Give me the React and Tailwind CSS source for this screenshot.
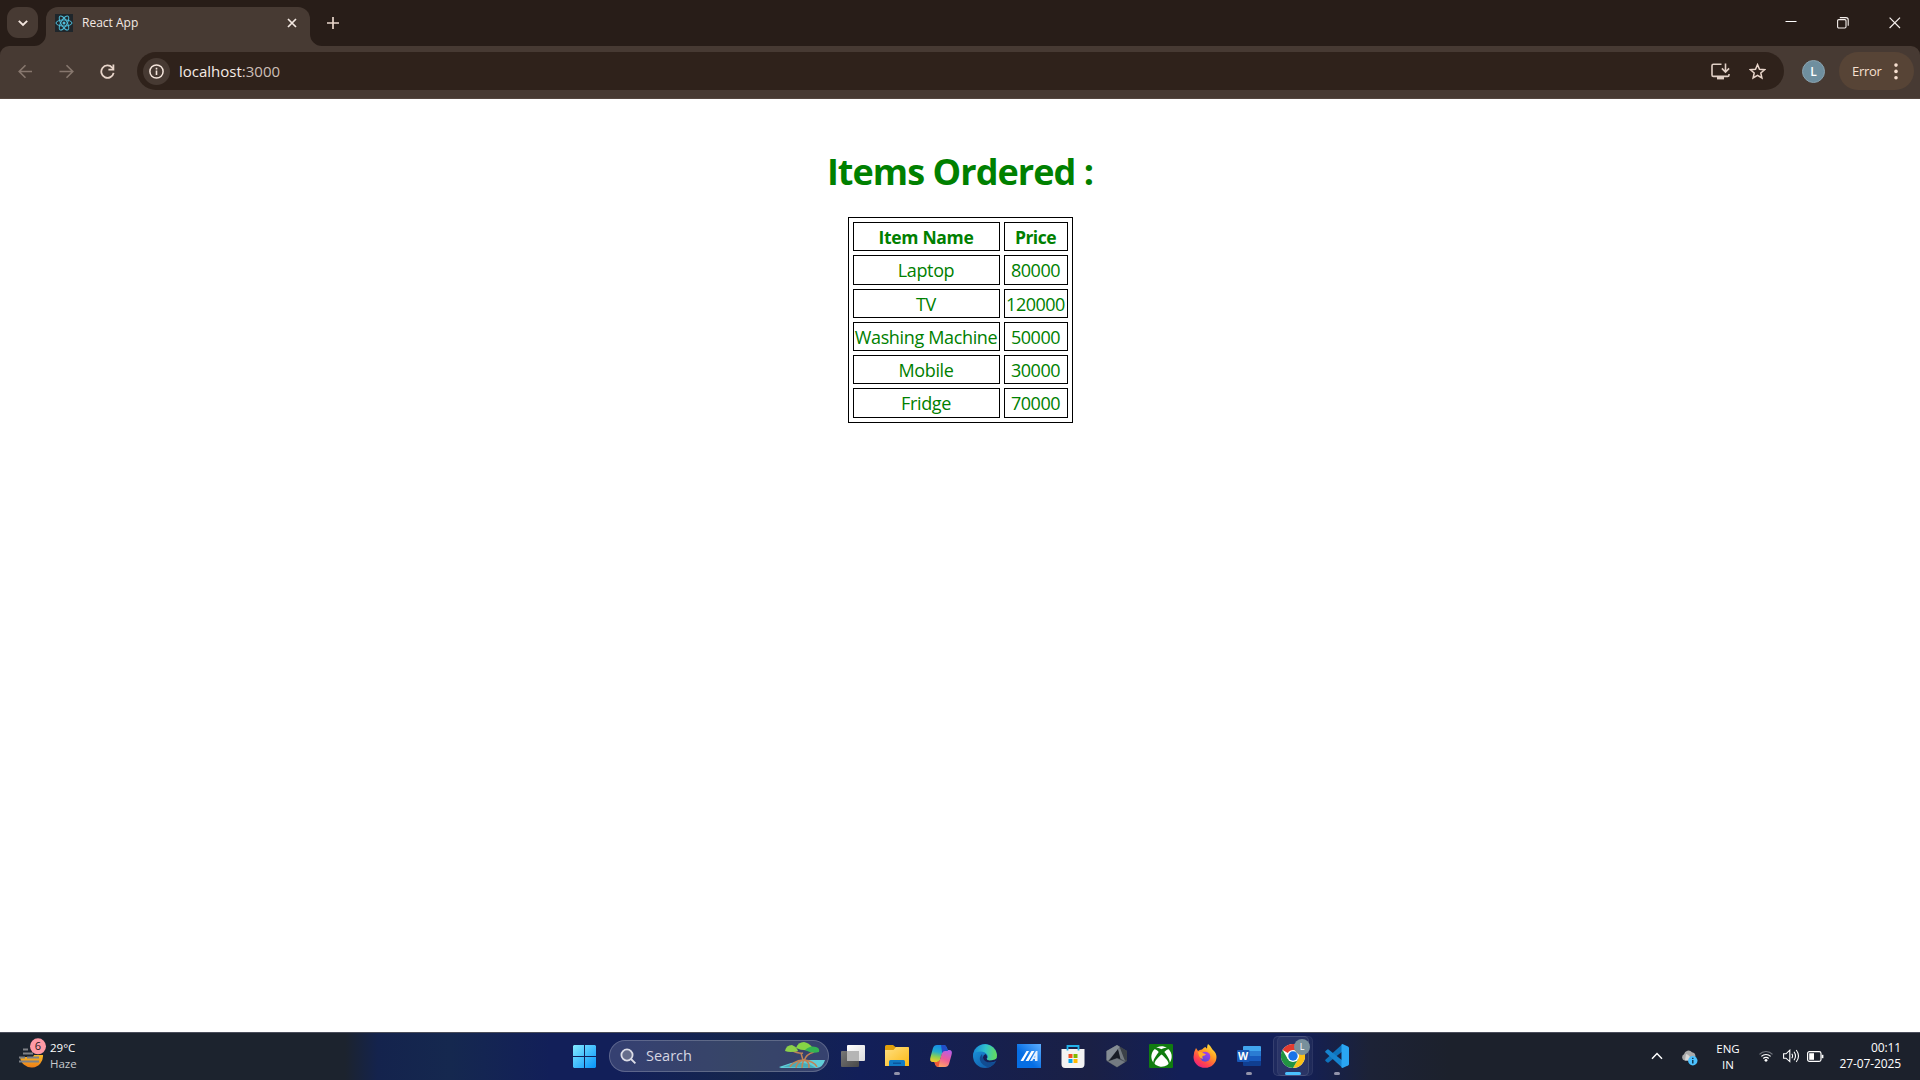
import React from "react";
import { FaXbox } from "react-icons/fa";

const chromeText = "font-['Open_Sans','Noto_Sans',sans-serif]";

function ReactLogo() {
  return (
    <svg width="18" height="18" viewBox="0 0 18 18" fill="none" stroke="#4fbdd9" strokeWidth="1">
      <rect width="18" height="18" fill="#1f262b" stroke="none" />
      <ellipse cx="9" cy="9" rx="8" ry="3.1" />
      <ellipse cx="9" cy="9" rx="8" ry="3.1" transform="rotate(60 9 9)" />
      <ellipse cx="9" cy="9" rx="8" ry="3.1" transform="rotate(120 9 9)" />
      <circle cx="9" cy="9" r="1.5" fill="#4fbdd9" stroke="none" />
    </svg>
  );
}

function TabStrip() {
  return (
    <div className="flex h-[46px] bg-[#281d18]">
      <div className="ml-[7px] mt-[7px] flex h-[31px] w-[31px] items-center justify-center rounded-[11px] bg-[#473a33]">
        <svg width="31" height="31" viewBox="0 0 31 31" fill="none" stroke="#f3e6df" strokeWidth="1.9">
          <path d="M11.8 13.8 L16 18 L20.2 13.8" />
        </svg>
      </div>
      <svg className="mt-[34px] shrink-0 -ml-[4px]" width="12" height="12" viewBox="0 0 12 12">
        <path d="M12 0 A12 12 0 0 1 0 12 H12 Z" fill="#473a33" />
      </svg>
      <div className="mt-[7px] flex h-[39px] w-[264px] items-start rounded-t-[12px] bg-[#473a33]">
        <div className="ml-[9px] mt-[7px]">
          <ReactLogo />
        </div>
        <span className={`ml-[9px] mt-[7px] whitespace-nowrap text-[12px] leading-[17px] text-[#f4e9e3] ${chromeText}`}>React App</span>
        <svg className="ml-auto mr-[13px] mt-[11px]" width="10" height="10" viewBox="0 0 10 10" stroke="#f4e9e3" strokeWidth="1.7">
          <path d="M1 1 L9 9 M9 1 L1 9" />
        </svg>
      </div>
      <svg className="mt-[34px] shrink-0" width="12" height="12" viewBox="0 0 12 12">
        <path d="M0 0 A12 12 0 0 0 12 12 H0 Z" fill="#473a33" />
      </svg>
      <svg className="ml-[5px] mt-[17px]" width="12" height="12" viewBox="0 0 12 12" stroke="#e8d5ca" strokeWidth="1.7">
        <path d="M6 0 V12 M0 6 H12" />
      </svg>
      <div className="ml-auto mr-[19px] flex">
        <svg className="mt-[21px]" width="12" height="2" viewBox="0 0 12 2">
          <path d="M0.5 0.5 H11.5" stroke="#fff" />
        </svg>
        <svg className="ml-[40px] mt-[17px]" width="12" height="12" viewBox="0 0 12 12" fill="none" stroke="#f5efec" strokeWidth="1.1">
          <rect x="0.6" y="2.6" width="8.4" height="8.4" rx="1.2" />
          <path d="M2.8 0.6 H9 Q11.2 0.6 11.2 2.8 V8.8" />
        </svg>
        <svg className="ml-[40px] mt-[17px]" width="12" height="12" viewBox="0 0 12 12" stroke="#f5efec" strokeWidth="1.2">
          <path d="M0.6 0.6 L11 11 M11 0.6 L0.6 11" />
        </svg>
      </div>
    </div>
  );
}

function Toolbar() {
  return (
    <div className="bg-[#281d18]">
      <div className="flex h-[53px] rounded-t-[9px] border-b border-[#54463f] bg-[#473a33]">
        <svg className="ml-[18px] mt-[18px]" width="15" height="15" viewBox="0 0 15 15" fill="none" stroke="#87776e" strokeWidth="1.6">
          <path d="M14 7.5 H1.6 M7.5 1.2 L1.2 7.5 L7.5 13.8" />
        </svg>
        <svg className="ml-[26px] mt-[18px]" width="15" height="15" viewBox="0 0 15 15" fill="none" stroke="#87776e" strokeWidth="1.6">
          <path d="M0.5 7.5 H13.4 M7.5 1.2 L13.8 7.5 L7.5 13.8" />
        </svg>
        <svg className="ml-[26px] mt-[18px]" width="15" height="15" viewBox="0 0 15 15" fill="none" stroke="#e8d5ca" strokeWidth="1.8">
          <path d="M13.6 8.8 A6.2 6.2 0 1 1 12.2 3.6 L13.2 4.8" />
          <path d="M13.4 0.6 V5.6 H8.4" />
        </svg>
        <div className="ml-[22px] mt-[6px] flex h-[38px] w-[1647px] items-center rounded-full bg-[#2f221b]">
          <div className="ml-[6px] flex h-[27px] w-[27px] items-center justify-center rounded-full bg-[#473a33]">
            <svg width="15" height="15" viewBox="0 0 15 15" fill="none" stroke="#f4e5dc" strokeWidth="1.5">
              <circle cx="7.5" cy="7.5" r="6.6" />
              <path d="M7.5 6.6 V11 M7.5 3.8 V5.4" strokeWidth="1.6" />
            </svg>
          </div>
          <span className={`ml-[9px] text-[15px] leading-[20px] text-[#f6ebe5] ${chromeText}`}>
            localhost<span className="text-[#cdbfb7]">:3000</span>
          </span>
          <svg className="ml-auto" width="20" height="17" viewBox="0 0 20 17" fill="none" stroke="#e0cfc5" strokeWidth="1.6">
            <path d="M10.5 1.3 H2.4 Q1 1.3 1 2.7 V12 Q1 13.4 2.4 13.4 H16.6 Q18 13.4 18 12 V11" />
            <path d="M14.5 0.4 V8.6 M10.9 5.4 L14.5 9 L18.1 5.4" />
            <path d="M6 15.2 H13" strokeWidth="2.4" />
          </svg>
          <svg className="ml-[18px] mr-[18px]" width="17" height="17" viewBox="0 0 17 17" fill="none" stroke="#e8d5ca" strokeWidth="1.5">
            <path d="M8.5 1.6 L10.5 6.2 L15.6 6.7 L11.8 10 L12.9 15 L8.5 12.4 L4.1 15 L5.2 10 L1.4 6.7 L6.5 6.2 Z" />
          </svg>
        </div>
        <div className={`ml-[18px] mt-[14px] flex h-[23px] w-[23px] items-center justify-center rounded-full border border-[#8aa3af] bg-[#6f8f9f] text-[12px] font-semibold text-white ${chromeText}`}>L</div>
        <div className="ml-[14px] mt-[6px] flex h-[38px] w-[75px] items-center rounded-full bg-[#574436]">
          <span className={`ml-[13px] pt-[1px] text-[13px] tracking-[-0.3px] text-[#f7e0d0] ${chromeText}`}>Error</span>
          <svg className="ml-auto mr-[16px]" width="4" height="17" viewBox="0 0 4 17" fill="#f7e0d0">
            <circle cx="2" cy="2.1" r="1.8" />
            <circle cx="2" cy="8.4" r="1.8" />
            <circle cx="2" cy="14.7" r="1.8" />
          </svg>
        </div>
      </div>
    </div>
  );
}

const items = [
  ["Laptop", "80000", "h-[30px]"],
  ["TV", "120000", "h-[29px]"],
  ["Washing Machine", "50000", "h-[29px]"],
  ["Mobile", "30000", "h-[29px]"],
  ["Fridge", "70000", "h-[30px]"],
];

function Row({ name, price, size, header }) {
  const weight = header ? "font-bold text-[17.5px]" : "text-[18px]";
  const nameTrack = header ? "tracking-[-0.3px]" : "tracking-[-0.35px]";
  return (
    <div className={`flex gap-[4px] ${size} ${weight} leading-[29px]`}>
      <div className={`w-[147px] whitespace-nowrap border border-black text-center ${nameTrack}`}>{name}</div>
      <div className="flex w-[64px] justify-center whitespace-nowrap border border-black tracking-[-0.5px]">{price}</div>
    </div>
  );
}

function Page() {
  return (
    <main className={`flex flex-1 flex-col items-center bg-white text-[#008000] ${chromeText}`}>
      <h1 className="mt-[48px] whitespace-nowrap text-[36px] font-bold leading-[50px] tracking-[-0.95px]">Items Ordered :</h1>
      <div className="mt-[20px] flex h-[206px] w-[225px] flex-col gap-[4px] border border-black p-[4px]">
        <Row name="Item Name" price="Price" size="h-[29px]" header />
        {items.map(([name, price, size]) => (
          <Row key={name} name={name} price={price} size={size} />
        ))}
      </div>
    </main>
  );
}

function WeatherIcon() {
  return (
    <svg width="29" height="30" viewBox="0 0 29 30">
      <defs>
        <linearGradient id="sun" x1="0" y1="0" x2="0" y2="1">
          <stop offset="0" stopColor="#f7b927" />
          <stop offset="1" stopColor="#ee7d16" />
        </linearGradient>
      </defs>
      <path d="M1 19 H14 L15 17 H24 A11.5 11.5 0 0 1 1 19 Z" fill="url(#sun)" />
      <path d="M4 11.5 H9 M4 15.5 H14 M0 19.5 H6 M8 19.5 H20 M0 23.5 H20" stroke="#7f8186" strokeWidth="2" />
      <circle cx="19" cy="8.3" r="8" fill="#ff9aa5" />
      <text x="19" y="12.2" textAnchor="middle" fontSize="11" fontFamily="Open Sans" fill="#1b1b20">6</text>
    </svg>
  );
}

function TreeIcon() {
  return (
    <svg width="46" height="28" viewBox="0 0 46 28">
      <path d="M0 25 L12 21 L27 18 L46 18 Q44 25 38 26 H2 Z" fill="#62cdd8" />
      <path d="M4 25 L18 20 L30 22 L37 26 Z" fill="#3795a5" opacity="0.6" />
      <path d="M12 8 Q20 12 24 11 M35 10 Q27 12 25 19 M22 11 Q23 15 24 18 M24 18 Q14 19 11 25 M24 18 Q18 20 17 26 M25 17 Q23 22 23 26 M25 18 Q31 20 30 26 M25 18 Q35 19 38 25" fill="none" stroke="#c08357" strokeWidth="1.5" />
      <path d="M6 9 Q7 3 13 3 Q18 5 19 9 Q11 11 6 9 Z" fill="#8bd04a" />
      <path d="M17 6 Q19 0 25 0 Q30 1 33 5 L31 8 Q23 9 17 6 Z" fill="#86d545" />
      <path d="M26 8 Q31 3 37 5 Q41 6 40 10 Q33 12 26 8 Z" fill="#35b353" />
    </svg>
  );
}

function StartIcon() {
  return (
    <svg width="23" height="23" viewBox="0 0 23 23">
      <defs>
        <linearGradient id="start" gradientUnits="userSpaceOnUse" x1="0" y1="0" x2="23" y2="23">
          <stop offset="0" stopColor="#83eaff" />
          <stop offset="1" stopColor="#0693fa" />
        </linearGradient>
      </defs>
      <path d="M1 0 H11 V11 H0 V1 Z M12 0 H22 L23 1 V11 H12 Z M0 12 H11 V23 H1 L0 22 Z M12 12 H23 V22 L22 23 H12 Z" fill="url(#start)" />
    </svg>
  );
}

const icons = {
  desktop: (
    <svg width="24" height="24" viewBox="0 0 24 24">
      <defs>
        <linearGradient id="tvw" x1="0" y1="0" x2="1" y2="1"><stop offset="0" stopColor="#fff" /><stop offset="1" stopColor="#dcdcdc" /></linearGradient>
        <linearGradient id="tvd" x1="0" y1="0" x2="1" y2="1"><stop offset="0" stopColor="#777" /><stop offset="1" stopColor="#484848" /></linearGradient>
      </defs>
      <rect x="6" y="1" width="18" height="16" rx="1" fill="url(#tvw)" />
      <rect x="0" y="7" width="18" height="16" rx="1" fill="url(#tvd)" />
      <path d="M6 7 H18 V17 H6 Z" fill="#b5b5b5" />
    </svg>
  ),
  folder: (
    <svg width="24" height="24" viewBox="0 0 24 24">
      <defs><linearGradient id="fold" x1="0" y1="0" x2="1" y2="1"><stop offset="0" stopColor="#ffe083" /><stop offset="1" stopColor="#fcb813" /></linearGradient></defs>
      <path d="M0 2.5 Q0 1 1.5 1 H8 L10.5 3 H22.5 Q24 3 24 4.5 V10 H0 Z" fill="#e09f0b" />
      <path d="M0 6 H8.5 L11 3 H23 Q24 3 24 4 V22 H0 Z" fill="url(#fold)" />
      <path d="M4 22 V17.5 Q4 16 5.5 16 H18.5 Q20 16 20 17.5 V22 Z" fill="#117ac6" />
      <path d="M8 18.5 H16 V20 H8 Z" fill="#0b549c" />
    </svg>
  ),
  copilot: (
    <svg width="24" height="24" viewBox="0 0 24 24">
      <defs>
        <linearGradient id="cpa" x1="0.5" y1="0" x2="0.3" y2="1"><stop offset="0" stopColor="#188be5" /><stop offset="0.4" stopColor="#20acd0" /><stop offset="0.7" stopColor="#8ccf51" /><stop offset="1" stopColor="#f5cd2a" /></linearGradient>
        <linearGradient id="cpb" x1="0.7" y1="0" x2="0.3" y2="1"><stop offset="0" stopColor="#b85ee5" /><stop offset="0.5" stopColor="#ee5c99" /><stop offset="1" stopColor="#ffaa61" /></linearGradient>
      </defs>
      <path d="M8 1 H15 Q17 1 18 4 L19 7 H16 Q14 7 13 10 L11 16 Q10 18 8 18 H4 Q0 18 1.5 13 L4 4 Q5 1 8 1 Z" fill="url(#cpa)" />
      <path d="M16 23 H9 Q7 23 6 20 L5.5 18 H8 Q10.5 18 11.5 14 L13 9 Q14 6 16 6 H20 Q24 6 22.5 11 L20 20 Q19 23 16 23 Z" fill="url(#cpb)" />
      <path d="M12 1 H15 Q17 1 18 4 L19 7 H16 Q14 7 13.2 9 Z" fill="#224ec7" />
      <path d="M5.5 18 H8 Q10 18 11 16 L9.5 23 Q7 23 6 20 Z" fill="#f05b35" />
    </svg>
  ),
  edge: (
    <svg width="24" height="24" viewBox="0 0 24 24">
      <defs>
        <linearGradient id="edgeTop" x1="0" y1="0.4" x2="1" y2="0.5"><stop offset="0" stopColor="#1787d8" /><stop offset="0.5" stopColor="#31c3cc" /><stop offset="1" stopColor="#65dc59" /></linearGradient>
        <linearGradient id="edgeLeft" x1="0" y1="0" x2="0.8" y2="1"><stop offset="0" stopColor="#1b9be2" /><stop offset="1" stopColor="#1157a5" /></linearGradient>
      </defs>
      <circle cx="12" cy="12" r="12" fill="url(#edgeLeft)" />
      <path d="M0.3 10 A12 12 0 0 1 24 11 Q24 17 18 17 Q13.5 17 14 14.5 Q15.5 13 14 10.5 Q12 7.5 7.5 7.5 Q2.5 7.6 0.3 10 Z" fill="url(#edgeTop)" />
      <path d="M9 10 Q5 14 8 18.5 Q10.5 22 15 23.4 Q20 22 22.4 18 Q20 19 17 19 Q9.5 18 9 10 Z" fill="#124c91" />
      <path d="M12.5 10 Q9.7 11.2 10 14 Q11.3 18.4 17 18.5 Q21 18.4 23 17 L24.5 14 L22 15.4 Q14 18 13.5 14.5 Q15.3 12.8 12.5 10 Z" fill="#151f56" />
    </svg>
  ),
  asus: (
    <svg width="24" height="24" viewBox="0 0 24 24">
      <defs><linearGradient id="asus" x1="0" y1="1" x2="1" y2="0"><stop offset="0.4" stopColor="#066ee4" /><stop offset="1" stopColor="#5daeff" /></linearGradient></defs>
      <rect width="24" height="24" fill="url(#asus)" />
      <path d="M3.5 17 L9.5 7 H12 L6.3 17 Z M8.5 17 L14.5 7 H17.4 L11.6 17 Z" fill="#fff" />
      <path d="M13 17 L19 7 H20.5 V17 H18 V15 H16.4 L15.2 17 Z M17.2 13.4 H18.2 V11.6 Z" fill="#e4f0ff" fillRule="evenodd" />
    </svg>
  ),
  store: (
    <svg width="24" height="24" viewBox="0 0 24 24">
      <path d="M0.5 5 H23.5 V20 Q23.5 24 20 24 H4 Q0.5 24 0.5 20 Z" fill="#f3f3f3" />
      <path d="M6.5 6.5 V2 H17.5 V6.5" fill="none" stroke="#22b2ea" strokeWidth="1.8" />
      <path d="M7.5 10 H11.5 V14 H7.5 Z" fill="#f25022" />
      <path d="M12.5 10 H16.5 V14 H12.5 Z" fill="#7fba00" />
      <path d="M7.5 15 H11.5 V19 H7.5 Z" fill="#00a4ef" />
      <path d="M12.5 15 H16.5 V19 H12.5 Z" fill="#ffb900" />
    </svg>
  ),
  armoury: (
    <svg width="24" height="24" viewBox="0 0 24 24">
      <path d="M12 1 L22 7 V17 L12 23.5 L1.5 17 V7 Z" fill="#4d545c" />
      <path d="M12 1 L22 7 V17 L17 14 Z" fill="#3b4148" />
      <path d="M1.5 7 L12 1 L15 3 L3 17 L1.5 16 Z" fill="#858d95" />
      <path d="M13 5 L4 17 L12 14 L18 16 Z" fill="#181d26" />
      <path d="M13 5 L15 4 L20 17 L15.5 15 Z M3 17.5 L12 14.5 L20 18 L12 23 Z" fill="#747b82" />
    </svg>
  ),
  xbox: (
    <div className="flex h-[24px] w-[24px] items-center justify-center rounded-[1px] bg-[#107c10]">
      <FaXbox size={21} color="#fff" />
    </div>
  ),
  firefox: (
    <svg width="24" height="24" viewBox="0 0 24 24">
      <defs>
        <linearGradient id="ffx" x1="0.85" y1="0" x2="0.2" y2="1"><stop offset="0" stopColor="#ffee3e" /><stop offset="0.4" stopColor="#ff9a22" /><stop offset="0.75" stopColor="#ff4051" /><stop offset="1" stopColor="#e81d86" /></linearGradient>
        <linearGradient id="ffp" x1="0.8" y1="0" x2="0.3" y2="1"><stop offset="0" stopColor="#ae3ef0" /><stop offset="1" stopColor="#504bd4" /></linearGradient>
      </defs>
      <path d="M3 4 L5 7 Q6.5 5.6 9 5.5 Q11 3.2 12.5 3 Q13 4 14 4.5 Q14 1.5 15 0 Q18 2 19.5 5.5 Q23.5 8.8 23.5 13 A11.5 10.8 0 0 1 0.5 13 Q0.6 7.8 3 4 Z" fill="url(#ffx)" />
      <circle cx="12.3" cy="12.8" r="5" fill="url(#ffp)" />
      <path d="M5 8 Q8 7 10 9 Q12 10 13 10.2 Q12 12 9.5 12 Q9 13.5 10 15 Q7 14.5 6 12 Z" fill="#ffac29" />
    </svg>
  ),
  word: (
    <svg width="24" height="24" viewBox="0 0 24 24">
      <path d="M7 2 H23 Q24 2 24 3 V7 H6 V3 Q6 2 7 2 Z" fill="#41a5ee" />
      <path d="M6 7 H24 V12 H6 Z" fill="#2b7cd3" />
      <path d="M6 12 H24 V17 H6 Z" fill="#185abd" />
      <path d="M6 17 H24 V21 Q24 22 23 22 H7 Q6 22 6 21 Z" fill="#103f91" />
      <rect x="0" y="6" width="12.5" height="12" rx="1" fill="#1857b6" />
      <text x="6.2" y="15.8" textAnchor="middle" fontSize="10.5" fontWeight="700" fontFamily="Open Sans" fill="#fff">W</text>
    </svg>
  ),
  chrome: (
    <svg width="24" height="24" viewBox="0 0 24 24">
      <circle cx="12" cy="12" r="12" fill="#fff" />
      <path d="M12 12 L1.6 6 A12 12 0 0 1 22.4 6 Z" fill="#e33b2e" />
      <path d="M12 6 H22.4 A12 12 0 0 1 12 24 L17.2 15 Z" fill="#fbc116" />
      <path d="M1.6 6 A12 12 0 0 0 12 24 L17.2 15 L12 12 L6.8 15 Z" fill="#229342" />
      <circle cx="12" cy="12" r="6" fill="#fff" />
      <circle cx="12" cy="12" r="4.7" fill="#1a73e8" />
    </svg>
  ),
  code: (
    <svg width="24" height="24" viewBox="0 0 24 24">
      <path d="M17 0.5 L18 7 L3.5 18.5 Q2.8 19 2 18.3 L0.5 17 Q-0.2 16.2 0.6 15.5 Z" fill="#0e73bd" />
      <path d="M18 17 L3.5 5.5 Q2.8 5 2 5.7 L0.5 7 Q-0.2 7.8 0.6 8.5 L17 23.5 Z" fill="#1683cf" />
      <path d="M17.5 0 L23 2.5 Q24 3 24 4 V20 Q24 21 23 21.5 L17.5 24 Q16.5 24 16.5 23 V1 Q16.5 0 17.5 0 Z" fill="#2aa6f2" />
    </svg>
  ),
};

const apps = ["desktop", "folder", "copilot", "edge", "asus", "store", "armoury", "xbox", "firefox", "word", "chrome", "code"];

function AppButton({ name }) {
  const active = name === "chrome";
  const open = name === "folder" || name === "word" || name === "code";
  return (
    <div className="relative flex h-[47px] w-[44px] justify-center">
      {active && <div className="absolute left-[6px] top-[3px] h-[40px] w-[36px] rounded-[5px] border border-white/5 bg-white/5" />}
      {active && <div className="absolute left-[2px] top-[3px] h-[40px] w-[36px] rounded-[5px] border border-white/10 bg-white/5" />}
      <div className="relative mt-[11px] h-[24px] w-[24px]">
        {icons[name]}
        {active && <div className={`absolute left-[13px] top-[-5px] flex h-[16px] w-[16px] items-center justify-center rounded-full bg-[#78909c] text-[9px] text-white ${chromeText}`}>L</div>}
      </div>
      {open && <div className="absolute left-[19px] top-[39px] h-[3px] w-[6px] rounded-full bg-[#9293aa]" />}
      {active && <div className="absolute left-[14px] top-[39px] h-[3px] w-[16px] rounded-full bg-[#4cc2ff]" />}
    </div>
  );
}

function Tray() {
  return (
    <div className={`ml-auto flex h-[47px] items-start text-[11.5px] leading-[16px] text-white ${chromeText}`}>
      <svg className="mt-[19px]" width="12" height="8" viewBox="0 0 12 8" fill="none" stroke="#fff" strokeWidth="1.5">
        <path d="M1 6.8 L6 1.6 L11 6.8" />
      </svg>
      <svg className="ml-[18px] mt-[17px]" width="17" height="16" viewBox="0 0 17 16">
        <path d="M3.5 10.5 A3.4 3.4 0 0 1 3 4.2 A4.6 4.6 0 0 1 11 2.2 Q14.5 2.5 14.5 7 V10.5 Z" fill="#aaa" />
        <path d="M5 4 Q8 4 11 10.5 H4 Z" fill="#d7d7d7" />
        <circle cx="11.8" cy="10.8" r="4.7" fill="#4cc2ff" />
        <path d="M11.8 10 V13.5 M11.8 7.8 V9" stroke="#08253a" strokeWidth="1.3" />
      </svg>
      <div className="ml-[18px] mt-[8px] w-[24px] text-center">ENG<br />IN</div>
      <svg className="ml-[19px] mt-[17px]" width="14" height="12" viewBox="0 0 14 12" fill="none" stroke="#fff" strokeWidth="1.2">
        <path d="M0.5 4.3 A9 9 0 0 1 13.5 4.3" stroke="#747880" />
        <path d="M2.4 6.4 A6.5 6.5 0 0 1 11.6 6.4 M4.3 8.5 A3.8 3.8 0 0 1 9.7 8.5" />
        <circle cx="7" cy="10.3" r="1.4" fill="#fff" stroke="none" />
      </svg>
      <svg className="ml-[10px] mt-[16px]" width="17" height="14" viewBox="0 0 17 14" fill="none" stroke="#fff" strokeWidth="1.1">
        <path d="M0.6 4.8 H3 L6.8 1.2 V12.6 L3 9.2 H0.6 Z" />
        <path d="M8.8 4.7 Q10.4 7 8.8 9.3 M11 2.8 Q14 7 11 11.2 M13.2 1 Q17.8 7 13.2 13" />
      </svg>
      <svg className="ml-[7px] mt-[18px]" width="17" height="11" viewBox="0 0 17 11" fill="none" stroke="#fff" strokeWidth="1.2">
        <rect x="0.6" y="0.6" width="13.4" height="9.8" rx="1.8" />
        <path d="M2.2 2.2 H7 V8.8 H2.2 Z" fill="#fff" stroke="none" />
        <path d="M15.5 3.8 V7.2" strokeWidth="1.8" />
      </svg>
      <div className="ml-[12px] mr-[19px] mt-[7px] w-[65px] whitespace-nowrap text-[12px] tracking-[-0.1px]">
        <div className="flex justify-end">00:11</div>
        <div className="flex justify-end">27-07-2025</div>
      </div>
    </div>
  );
}

function Taskbar() {
  return (
    <footer className="flex h-[48px] border-t border-[#4a4d5b] bg-[linear-gradient(90deg,#1c232e_0px,#1c232e_345px,#14234d_378px,#15284f_450px,#121f59_550px,#121f59_620px,#15264d_740px,#121f59_860px,#1a2045_1090px,#131f57_1180px,#131f57_1300px,#1c2236_1370px,#1c212c_1450px,#1c212c_1920px)]">
      <div className="flex w-[573px] items-start">
        <div className="ml-[19px] mt-[5px]"><WeatherIcon /></div>
        <div className={`ml-[2px] mt-[7px] text-[11.5px] leading-[16px] text-white ${chromeText}`}>
          29°C
          <div className="text-[#c7cacd]">Haze</div>
        </div>
      </div>
      <div className="mt-[12px]"><StartIcon /></div>
      <div className="ml-[13px] mt-[7px] flex h-[32px] w-[220px] items-center rounded-full border border-white/20 bg-white/15">
        <svg className="ml-[10px]" width="17" height="17" viewBox="0 0 17 17" fill="none" stroke="#dcdde7" strokeWidth="1.8">
          <circle cx="7" cy="7" r="5.6" fill="#666d8b" />
          <path d="M11 11 L15.4 15.4" />
        </svg>
        <span className={`ml-[9px] text-[14.5px] text-[#d5d6e2] ${chromeText}`}>Search</span>
        <div className="ml-auto mr-[3px]"><TreeIcon /></div>
      </div>
      <div className="ml-[2px] flex">
        {apps.map((name) => <AppButton key={name} name={name} />)}
      </div>
      <Tray />
    </footer>
  );
}

export default function App() {
  return (
    <div className="flex h-[1080px] w-[1920px] flex-col overflow-hidden bg-white">
      <TabStrip />
      <Toolbar />
      <Page />
      <Taskbar />
    </div>
  );
}
